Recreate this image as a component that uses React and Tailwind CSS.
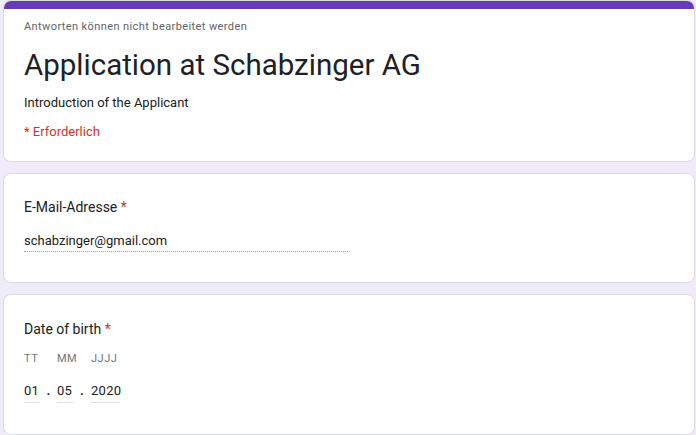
// Form response view: header card, email field, date field.

const Required = () => <span className="text-[#d93025]"> *</span>;

const Card = ({ children, className = "" }) => (
  <div className={`rounded-lg border border-[#dadce0] bg-white ${className}`}>{children}</div>
);

const DatePart = ({ label, value, width }) => (
  <div className="flex shrink-0 flex-col whitespace-nowrap" style={{ width }}>
    <span className="h-[13px] text-[11px] leading-[13px] tracking-[0.5px] text-[#70757a]">{label}</span>
    <span className="mt-[18px] border-b border-[#e0e0e0] pb-[3px] text-[13px] leading-[16px] tracking-[0.3px] text-[#202124]">
      {value}
    </span>
  </div>
);

const Dot = ({ width }) => (
  <span
    className="mt-[31px] shrink-0 text-center text-[13px] font-bold leading-[16px] text-[#202124]"
    style={{ width }}
  >
    .
  </span>
);

export default function App() {
  return (
    <div className="flex h-[435px] w-[696px] flex-col gap-[11px] overflow-hidden bg-[#f0ebf8] pl-[3px] pr-[1px] font-['Roboto',sans-serif]">
      <Card className="overflow-hidden">
        <div className="h-[8px] bg-[#673ab7]" />
        <div className="px-[20px] pb-[21px] pt-[10px]">
          <p className="text-[11px] leading-[16px] tracking-[0.4px] text-[#5f6368]">
            Antworten können nicht bearbeitet werden
          </p>
          <h1 className="mt-[12px] text-[29.5px] leading-[36px] text-[#202124]">
            Application at Schabzinger AG
          </h1>
          <p className="mt-[12px] text-[13px] leading-[16px] text-[#202124]">Introduction of the Applicant</p>
          <p className="mt-[13px] text-[13px] leading-[16px] text-[#d93025]">* Erforderlich</p>
        </div>
      </Card>

      <Card className="px-[20px] pb-[30px] pt-[23px]">
        <p className="text-[14px] leading-[20px] text-[#202124]">
          E-Mail-Adresse
          <Required />
        </p>
        <p className="mt-[15px] w-[324px] border-b border-dotted border-[#9aa0a6] pb-[1px] text-[13px] leading-[18px] text-[#202124]">
          schabzinger@gmail.com
        </p>
      </Card>

      <Card className="flex-1 px-[20px] pt-[24px]">
        <p className="text-[14px] leading-[20px] text-[#202124]">
          Date of birth
          <Required />
        </p>
        <div className="mt-[13px] flex items-start">
          <DatePart label="TT" value="01" width={16} />
          <Dot width={17} />
          <DatePart label="MM" value="05" width={16} />
          <Dot width={18} />
          <DatePart label="JJJJ" value="2020" width={29} />
        </div>
      </Card>
    </div>
  );
}
